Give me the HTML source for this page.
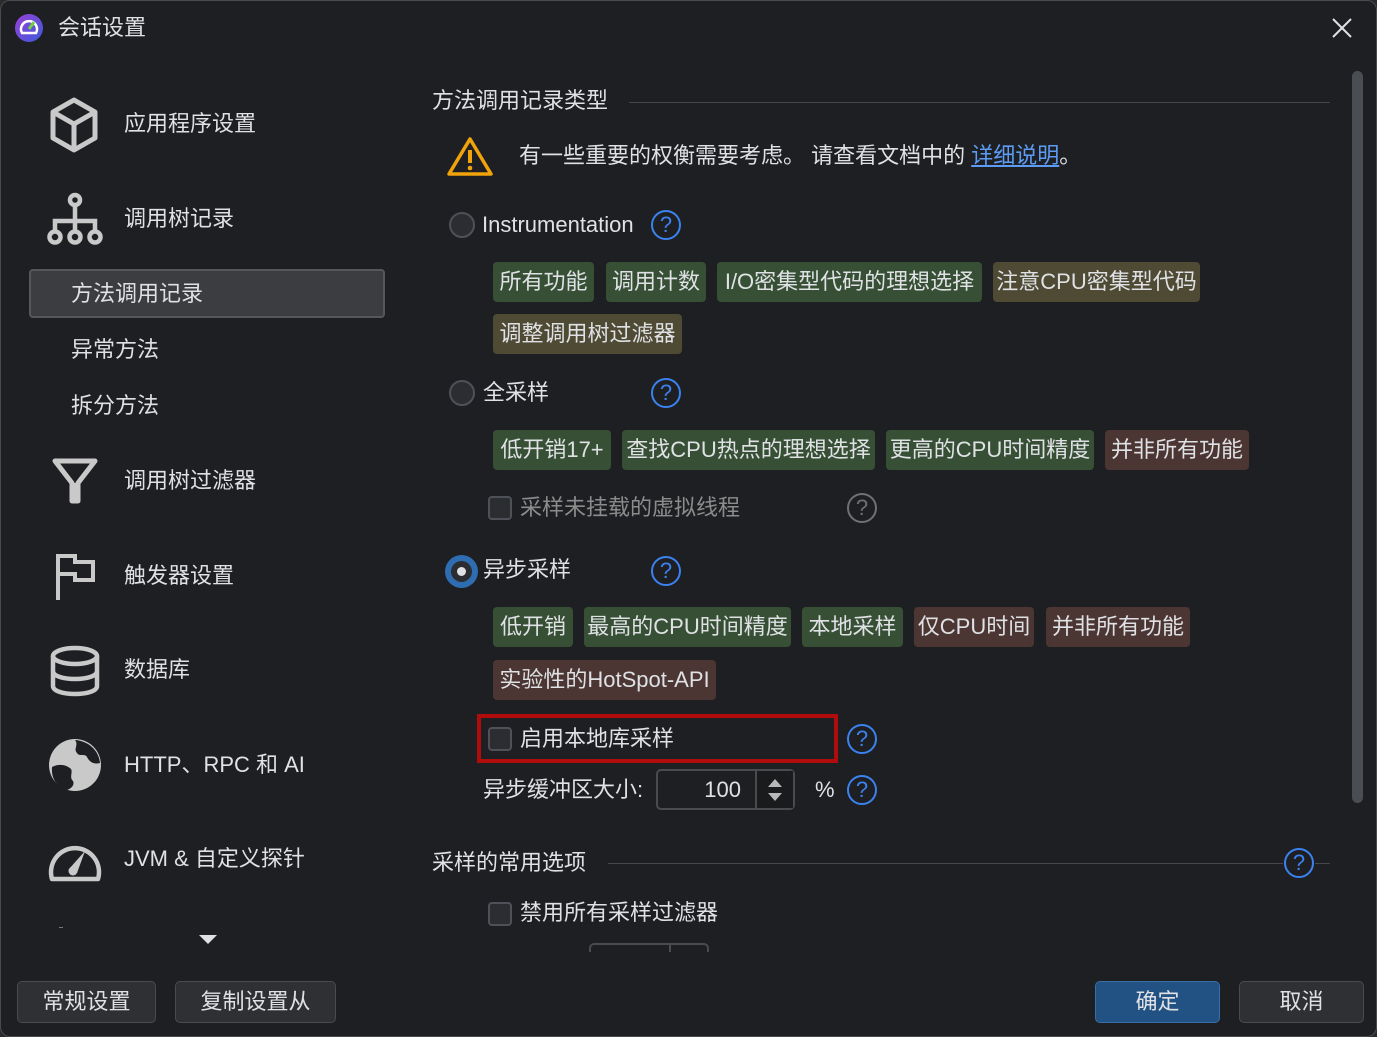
<!DOCTYPE html>
<html><head><meta charset="utf-8"><style>
*{margin:0;padding:0;box-sizing:border-box}
body{width:1377px;height:1037px;background:#2b2b2b;overflow:hidden;font-family:"Liberation Sans","Noto Sans CJK SC",sans-serif;color:#dfe1e5}
#d{position:absolute;left:0;top:0;width:1377px;height:1037px;background:#1e1f22;border:1px solid #4a4b4e;border-radius:10px;overflow:hidden}
.a{position:absolute;white-space:nowrap}
.t{font-size:22px;line-height:24px}
.tag{position:absolute;height:40px;border-radius:4px;font-size:22px;line-height:40px;text-align:center;color:#dfe1e5;white-space:nowrap}
.g{background:#375035}.o{background:#4e4a34}.r{background:#4b3633}
.rad{position:absolute;width:26px;height:26px;border-radius:50%;border:2px solid #4e5157;background:#2b2d30}
.cb{position:absolute;width:24px;height:24px;border-radius:4px;border:2px solid #4e5157;background:#2b2d30}
.q{position:absolute;width:30px;height:30px;border-radius:50%;border:2.5px solid #3b82f0;color:#3b82f0;font-size:22px;line-height:25px;text-align:center}
.q.dis{border-color:#6f7073;color:#6f7073}
.btn{position:absolute;height:42px;border-radius:5px;background:#2f3033;border:1px solid #4a4b4e;font-size:22px;line-height:40px;text-align:center;color:#dfe1e5}
svg{position:absolute}
</style></head><body><div id="d">
<svg style="left:14px;top:13px" width="28" height="28" viewBox="0 0 28 28"><defs><linearGradient id="lg" x1="0" y1="0" x2="1" y2="1"><stop offset="0" stop-color="#9b3fd6"/><stop offset="1" stop-color="#3b5bdb"/></linearGradient></defs><circle cx="14" cy="14" r="14" fill="url(#lg)"/><path d="M7 19 A8 8 0 1 1 21 19 Z" fill="none" stroke="#fff" stroke-width="2.5"/><path d="M14 15 L19 8" stroke="#6fd04a" stroke-width="3"/></svg>
<div class="a t" style="left:57px;top:15px;color:#dfe1e5">会话设置</div>
<svg style="left:1330px;top:16px" width="22" height="22" viewBox="0 0 22 22"><path d="M2 2L20 20M20 2L2 20" stroke="#dfe1e5" stroke-width="2"/></svg>

<svg style="left:48px;top:96px" width="50" height="56" viewBox="0 0 50 56"><path d="M25 3 L46 15 L46 41 L25 53 L4 41 L4 15 Z M4 15 L25 27 L46 15 M25 27 L25 53" fill="none" stroke="#c9c9c9" stroke-width="5" stroke-linejoin="round"/></svg>
<div class="a t" style="left:123px;top:111px">应用程序设置</div>
<svg style="left:46px;top:190px" width="56" height="56" viewBox="0 0 56 56"><g fill="none" stroke="#c9c9c9" stroke-width="4.5"><circle cx="28" cy="9" r="5"/><circle cx="8" cy="46" r="5.5"/><circle cx="28" cy="46" r="5.5"/><circle cx="48" cy="46" r="5.5"/><path d="M28 14V40M8 40V30H48V40"/></g></svg>
<div class="a t" style="left:123px;top:206px">调用树记录</div>
<div class="a" style="left:28px;top:268px;width:356px;height:49px;background:#3c3d40;border:2px solid #56575a;border-radius:4px"></div>
<div class="a t" style="left:70px;top:281px">方法调用记录</div>
<div class="a t" style="left:70px;top:337px">异常方法</div>
<div class="a t" style="left:70px;top:393px">拆分方法</div>
<svg style="left:50px;top:456px" width="48" height="48" viewBox="0 0 48 48"><path d="M4 4H44L27 26V44H21V26Z" fill="none" stroke="#c9c9c9" stroke-width="5" stroke-linejoin="round"/><path d="M21 26H27V44H21Z" fill="#c9c9c9"/></svg>
<div class="a t" style="left:123px;top:468px">调用树过滤器</div>
<svg style="left:52px;top:551px" width="46" height="50" viewBox="0 0 46 50"><path d="M5 48V4H22V10H40V28H22V22H5" fill="none" stroke="#c9c9c9" stroke-width="4"/></svg>
<div class="a t" style="left:123px;top:563px">触发器设置</div>
<svg style="left:48px;top:644px" width="52" height="52" viewBox="0 0 52 52"><g fill="none" stroke="#c9c9c9" stroke-width="4.5"><ellipse cx="26" cy="11" rx="22" ry="8"/><path d="M4 11V41C4 46 14 49 26 49S48 46 48 41V11M4 26C4 31 14 34 26 34S48 31 48 26"/></g></svg>
<div class="a t" style="left:123px;top:657px">数据库</div>
<svg style="left:46px;top:736px" width="56" height="56" viewBox="0 0 56 56"><circle cx="28" cy="28" r="26" fill="#c9c9c9"/><path d="M5 30 C12 26 20 28 24 32 C26 36 22 40 26 44 C28 48 24 52 20 53 C10 50 4 42 5 30Z M28 3 C32 8 26 12 30 16 C32 20 38 16 40 20 C42 24 46 28 53 26 C52 14 42 4 28 3Z" fill="#1e1f22"/></svg>
<div class="a t" style="left:123px;top:752px">HTTP、RPC 和 AI</div>
<svg style="left:46px;top:832px" width="56" height="50" viewBox="0 0 56 50"><path d="M5 46 A24 24 0 1 1 51 46 Z" fill="none" stroke="#c9c9c9" stroke-width="4.5" stroke-linejoin="round"/><path d="M22 36 L38 18 L30 40 Z" fill="#c9c9c9"/><circle cx="26" cy="38" r="4.5" fill="#c9c9c9"/></svg>
<div class="a t" style="left:123px;top:846px">JVM &amp; 自定义探针</div>
<div class="a" style="left:58px;top:926px;width:4px;height:1px;background:#777"></div>
<svg style="left:198px;top:934px" width="18" height="10" viewBox="0 0 18 10"><path d="M0 0H18L9 9Z" fill="#dfe1e5"/></svg>

<div class="a t" style="left:431px;top:88px">方法调用记录类型</div>
<div class="a" style="left:628px;top:101px;width:701px;height:1px;background:#45464a"></div>
<svg style="left:446px;top:135px" width="46" height="40" viewBox="0 0 46 40"><path d="M23 3 L44 38 H2 Z" fill="none" stroke="#f0a30a" stroke-width="3.5" stroke-linejoin="round"/><path d="M23 14V27" stroke="#f0a30a" stroke-width="4"/><circle cx="23" cy="32" r="2.3" fill="#f0a30a"/></svg>
<div class="a t" style="left:518px;top:143px">有一些重要的权衡需要考虑。 请查看文档中的 <span style="color:#5c9cf5;text-decoration:underline">详细说明</span>。</div>

<div class="rad" style="left:448px;top:211px"></div>
<div class="a t" style="left:481px;top:212px">Instrumentation</div>
<div class="q" style="left:650px;top:209px">?</div>
<div class="tag g" style="left:492px;top:261px;width:101px">所有功能</div>
<div class="tag g" style="left:605px;top:261px;width:100px">调用计数</div>
<div class="tag g" style="left:716px;top:261px;width:265px">I/O密集型代码的理想选择</div>
<div class="tag o" style="left:992px;top:261px;width:207px">注意CPU密集型代码</div>
<div class="tag o" style="left:492px;top:313px;width:189px">调整调用树过滤器</div>

<div class="rad" style="left:448px;top:379px"></div>
<div class="a t" style="left:482px;top:380px">全采样</div>
<div class="q" style="left:650px;top:377px">?</div>
<div class="tag g" style="left:492px;top:429px;width:118px">低开销17+</div>
<div class="tag g" style="left:621px;top:429px;width:253px">查找CPU热点的理想选择</div>
<div class="tag g" style="left:885px;top:429px;width:208px">更高的CPU时间精度</div>
<div class="tag r" style="left:1104px;top:429px;width:144px">并非所有功能</div>
<div class="cb" style="left:487px;top:495px"></div>
<div class="a t" style="left:519px;top:495px;color:#8c8c8c">采样未挂载的虚拟线程</div>
<div class="q dis" style="left:846px;top:492px">?</div>

<div class="a" style="left:444px;top:554px;width:33px;height:33px;border-radius:50%;background:#2f6db3"></div>
<div class="a" style="left:450px;top:560px;width:21px;height:21px;border-radius:50%;background:#2b2d30"></div>
<div class="a" style="left:456px;top:566px;width:9px;height:9px;border-radius:50%;background:#dfe1e5"></div>
<div class="a t" style="left:482px;top:557px">异步采样</div>
<div class="q" style="left:650px;top:555px">?</div>
<div class="tag g" style="left:492px;top:606px;width:80px">低开销</div>
<div class="tag g" style="left:583px;top:606px;width:207px">最高的CPU时间精度</div>
<div class="tag g" style="left:801px;top:606px;width:101px">本地采样</div>
<div class="tag r" style="left:913px;top:606px;width:120px">仅CPU时间</div>
<div class="tag r" style="left:1045px;top:606px;width:144px">并非所有功能</div>
<div class="tag r" style="left:492px;top:659px;width:223px">实验性的HotSpot-API</div>

<div class="a" style="left:476px;top:713px;width:361px;height:49px;border:4px solid #b00c0c"></div>
<div class="cb" style="left:487px;top:726px"></div>
<div class="a t" style="left:519px;top:726px">启用本地库采样</div>
<div class="q" style="left:846px;top:723px">?</div>
<div class="a t" style="left:482px;top:777px">异步缓冲区大小:</div>
<div class="a" style="left:655px;top:768px;width:139px;height:41px;border:2px solid #4a4b4e;border-radius:5px;background:#1e1f22"></div>
<div class="a" style="left:754px;top:770px;width:38px;height:37px;background:#1a1b1d;border-left:2px solid #4a4b4e"></div>
<div class="a t" style="left:700px;top:777px;width:40px;text-align:right">100</div>
<svg style="left:765px;top:776px" width="18" height="26" viewBox="0 0 18 26"><path d="M2 10H16L9 2Z M2 16H16L9 24Z" fill="#b8b8b8"/></svg>
<div class="a t" style="left:814px;top:777px">%</div>
<div class="q" style="left:846px;top:774px">?</div>

<div class="a t" style="left:431px;top:850px">采样的常用选项</div>
<div class="a" style="left:607px;top:862px;width:722px;height:1px;background:#45464a"></div>
<div class="a" style="left:1282px;top:846px;width:32px;height:32px;background:#1e1f22"></div>
<div class="q" style="left:1283px;top:847px">?</div>
<div class="cb" style="left:487px;top:901px"></div>
<div class="a t" style="left:519px;top:900px">禁用所有采样过滤器</div>
<div class="a" style="left:588px;top:942px;width:120px;height:10px;border:2px solid #4a4b4e;border-bottom:none;border-radius:5px 5px 0 0"></div>
<div class="a" style="left:668px;top:944px;width:2px;height:8px;background:#4a4b4e"></div>
<div class="a" style="left:430px;top:951px;width:920px;height:20px;background:#1e1f22"></div>

<div class="a" style="left:1351px;top:70px;width:11px;height:732px;border-radius:6px;background:#4a4d52"></div>

<div class="btn" style="left:16px;top:980px;width:139px">常规设置</div>
<div class="btn" style="left:174px;top:980px;width:161px">复制设置从</div>
<div class="btn" style="left:1094px;top:980px;width:125px;background:#225283;border-color:#3a6fa5">确定</div>
<div class="btn" style="left:1238px;top:980px;width:125px">取消</div>
</div></body></html>
